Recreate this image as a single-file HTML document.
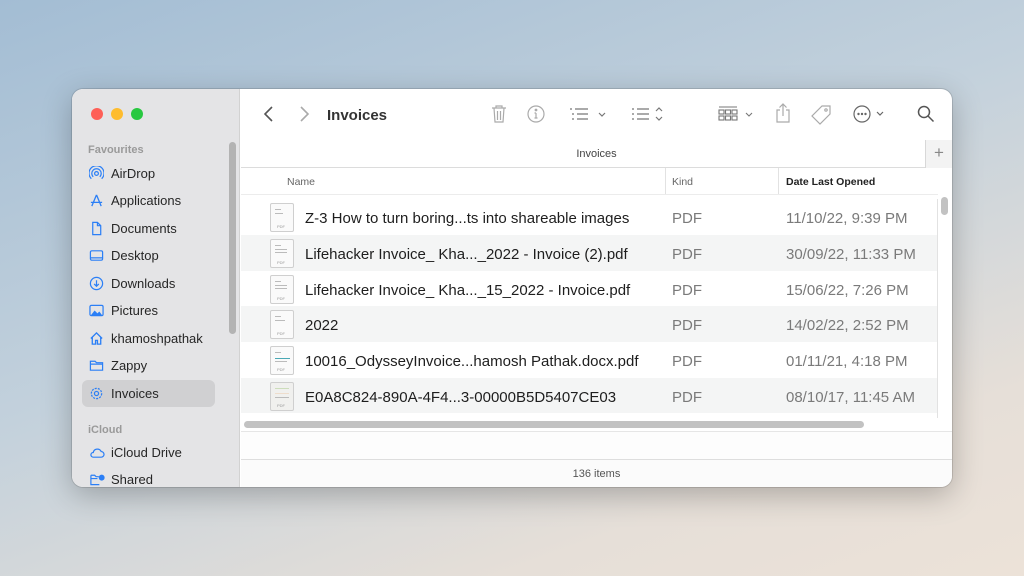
<!DOCTYPE html>
<html><head><meta charset="utf-8"><style>
*{box-sizing:border-box;margin:0;padding:0}
body{width:1024px;height:576px;overflow:hidden;font-family:"Liberation Sans",sans-serif;background:linear-gradient(160deg,#a3bdd4 0%,#c3d1dc 45%,#e6dfd8 80%,#ece2d8 100%);position:relative}
.win{position:absolute;left:72px;top:89px;width:880px;height:398px;border-radius:11px;overflow:hidden;background:#fff;box-shadow:0 8px 30px rgba(0,0,0,.25),0 0 0 1px rgba(0,0,0,.12)}
.side{position:absolute;left:0;top:0;width:168px;height:100%;background:#e4e4e6;border-right:1px solid #d2d2d2}
.dot{position:absolute;top:19px;width:12px;height:12px;border-radius:50%}
.sec{position:absolute;left:16px;font-size:11px;color:#9a9a9a;font-weight:bold}
.it{position:absolute;left:10px;width:133px;height:27px;font-size:13px;color:#262626;line-height:27px;padding-left:29px}
.it svg{position:absolute;left:7px;top:6px}
.sel{background:#d0d0d2;border-radius:6px}
.vsb{position:absolute;left:157px;top:53px;width:7px;height:192px;background:#b3b3b3;border-radius:4px}
.main{position:absolute;left:169px;top:0;right:0;height:100%}
.tb{position:absolute;top:0;left:0;right:0;height:51px}
.tab{position:absolute;top:51px;left:0;right:0;height:28px;border-bottom:1px solid #dcdcdc;font-size:11px;color:#444;text-align:center;line-height:28px}
.plus{position:absolute;right:0;top:0;width:27px;height:28px;border-left:1px solid #d8d8d8;background:#f3f3f3;color:#888;font-size:17px;line-height:26px;text-align:center}
.hdr{position:absolute;top:79px;left:0;width:697px;height:27px;font-size:10.5px;color:#666;border-bottom:1px solid #ececec}
.hdr span{position:absolute;top:8px}
.rows{position:absolute;top:110px;left:0;width:697px;border-right:1px solid #e2e2e2}
.r{height:35.8px;position:relative;font-size:15px;color:#1e1e1e}
.r:nth-child(even){background:#f4f5f5}
.r .n{position:absolute;left:64px;top:11px}
.r .k{position:absolute;left:431px;top:11px;color:#7a7a7a}
.r .d{position:absolute;left:545px;top:11px;color:#7a7a7a}
.fi{position:absolute;left:29px;top:4px;width:24px;height:29px;background:#fafafa;border:1px solid #cfcfcf;border-radius:2px}
.fi:after{content:"PDF";position:absolute;bottom:2px;left:6px;font-size:4px;color:#999}
.fi i{position:absolute;left:4px;height:1px;background:#bbb}
.ic{position:absolute;top:16px}
</style></head><body>
<div class="win">
<div class="side">
<div class="dot" style="left:19px;background:#fe5f57"></div>
<div class="dot" style="left:39px;background:#febc2e"></div>
<div class="dot" style="left:59px;background:#28c840"></div>
<div class="sec" style="top:55px">Favourites</div>
<div class="it" style="top:71px"><svg width="15" height="15" viewBox="0 0 16 16" fill="none" stroke="#2b7ff6" stroke-width="1.3"><circle cx="8" cy="8" r="2"/><path d="M4.5 11.5a5 5 0 1 1 7 0M2.5 13.5a8 8 0 1 1 11 0"/></svg>AirDrop</div>
<div class="it" style="top:98px"><svg width="15" height="15" viewBox="0 0 16 16" fill="none" stroke="#2b7ff6" stroke-width="1.4"><path d="M8 2 3 14M8 2l5 12M2 10h12"/></svg>Applications</div>
<div class="it" style="top:126px"><svg width="15" height="15" viewBox="0 0 16 16" fill="none" stroke="#2b7ff6" stroke-width="1.3"><path d="M4 1.5h5l3.5 3.5v9.5H4z M9 1.5V5h3.5"/></svg>Documents</div>
<div class="it" style="top:153px"><svg width="15" height="15" viewBox="0 0 16 16" fill="none" stroke="#2b7ff6" stroke-width="1.3"><rect x="1.5" y="3" width="13" height="10" rx="1.5"/><path d="M1.5 10.5h13"/></svg>Desktop</div>
<div class="it" style="top:181px"><svg width="15" height="15" viewBox="0 0 16 16" fill="none" stroke="#2b7ff6" stroke-width="1.3"><circle cx="8" cy="8" r="6.5"/><path d="M8 4.5v6M5.5 8.5 8 11l2.5-2.5"/></svg>Downloads</div>
<div class="it" style="top:208px"><svg width="15" height="15" viewBox="0 0 16 16"><rect x="1" y="2.5" width="14" height="11" rx="1.5" fill="none" stroke="#2b7ff6" stroke-width="1.3"/><path d="M2 13l4-5 3 3 2-2 3 4z" fill="#2b7ff6"/></svg>Pictures</div>
<div class="it" style="top:236px"><svg width="15" height="15" viewBox="0 0 16 16" fill="none" stroke="#2b7ff6" stroke-width="1.4"><path d="M2 8 8 2l6 6M3.5 6.5V14h3.5v-4h2v4h3.5V6.5"/></svg>khamoshpathak</div>
<div class="it" style="top:263px"><svg width="15" height="15" viewBox="0 0 16 16" fill="none" stroke="#2b7ff6" stroke-width="1.3"><path d="M1.5 3.5h5l1.5 1.5h6.5v8h-13z M1.5 6.5h13"/></svg>Zappy</div>
<div class="it sel" style="top:291px"><svg width="15" height="15" viewBox="0 0 16 16" fill="none" stroke="#2b7ff6" stroke-width="1.3"><circle cx="8" cy="8" r="2.2"/><circle cx="8" cy="8" r="5.5" stroke-dasharray="2.2 1.2"/></svg>Invoices</div>
<div class="sec" style="top:335px">iCloud</div>
<div class="it" style="top:350px"><svg width="16" height="15" viewBox="0 0 16 16" fill="none" stroke="#2b7ff6" stroke-width="1.3"><path d="M4 13h8.5a3 3 0 0 0 0-6 4.5 4.5 0 0 0-8.5 1A2.5 2.5 0 0 0 4 13z"/></svg>iCloud Drive</div>
<div class="it" style="top:377px"><svg width="16" height="15" viewBox="0 0 16 16" fill="none" stroke="#2b7ff6" stroke-width="1.3"><path d="M1.5 3.5h4l1.5 1.5h3M1.5 3.5v10h9M1.5 7h7"/><circle cx="13" cy="6" r="2.5" fill="#2b7ff6"/></svg>Shared</div>
<div class="vsb"></div>
</div>
<div class="main">
<div class="tb">
<svg class="ic" style="left:22px" width="12" height="18" viewBox="0 0 12 18" fill="none" stroke="#555" stroke-width="1.6"><path d="M9 2 2 9l7 7"/></svg>
<svg class="ic" style="left:57px" width="12" height="18" viewBox="0 0 12 18" fill="none" stroke="#aaa" stroke-width="1.6"><path d="M3 2l7 7-7 7"/></svg>
<div style="position:absolute;left:86px;top:18px;font-size:15px;font-weight:bold;color:#333">Invoices</div>
<svg class="ic" style="left:250px" width="16" height="18" viewBox="0 0 16 18" fill="none" stroke="#aaa" stroke-width="1.2"><path d="M1 3h14M5 3V1h6v2M3 3l1 14h8l1-14M6.5 6v9M9.5 6v9"/></svg>
<svg class="ic" style="left:286px" width="18" height="18" viewBox="0 0 18 18" fill="none" stroke="#aaa" stroke-width="1.2"><circle cx="9" cy="9" r="8"/><path d="M9 8v5M7.5 13h3M7.5 8H9"/><circle cx="9" cy="5" r=".8" fill="#aaa"/></svg>
<svg class="ic" style="left:328px" width="38" height="18" viewBox="0 0 38 18" fill="none" stroke="#777" stroke-width="1.2"><path d="M1 4h2M6 4h13M3 9h2M8 9h11M3 14h2M8 14h11M30 8l3 3 3-3"/></svg>
<svg class="ic" style="left:390px" width="36" height="18" viewBox="0 0 36 18" fill="none" stroke="#777" stroke-width="1.2"><path d="M1 4h2M6 4h12M1 9h2M6 9h12M1 14h2M6 14h12M25 6l3-3 3 3M25 12l3 3 3-3"/></svg>
<svg class="ic" style="left:477px" width="38" height="18" viewBox="0 0 38 18" fill="none" stroke="#777" stroke-width="1.1"><path d="M1 2h18"/><rect x="1" y="5" width="5" height="4"/><rect x="7.5" y="5" width="5" height="4"/><rect x="14" y="5" width="5" height="4"/><rect x="1" y="11" width="5" height="4"/><rect x="7.5" y="11" width="5" height="4"/><rect x="14" y="11" width="5" height="4"/><path d="M28 8l3 3 3-3"/></svg>
<svg class="ic" style="left:534px;top:14px" width="16" height="20" viewBox="0 0 16 20" fill="none" stroke="#aaa" stroke-width="1.2"><path d="M8 1v12M4.5 4.5 8 1l3.5 3.5M5 7H2v12h12V7h-3"/></svg>
<svg class="ic" style="left:570px" width="20" height="20" viewBox="0 0 20 20" fill="none" stroke="#aaa" stroke-width="1.2"><path d="M11 1h8v8L9 19 1 11z"/><circle cx="15" cy="5" r="1.2"/></svg>
<svg class="ic" style="left:612px" width="36" height="20" viewBox="0 0 36 20" fill="none" stroke="#666" stroke-width="1.2"><circle cx="9" cy="9" r="8"/><circle cx="5.5" cy="9" r=".6" fill="#666"/><circle cx="9" cy="9" r=".6" fill="#666"/><circle cx="12.5" cy="9" r=".6" fill="#666"/><path d="M24 7l3 3 3-3"/></svg>
<svg class="ic" style="left:676px" width="18" height="18" viewBox="0 0 18 18" fill="none" stroke="#555" stroke-width="1.5"><circle cx="7" cy="7" r="5.5"/><path d="M11 11l5.5 5.5"/></svg>
</div>
<div class="tab">Invoices<div class="plus">+</div></div>
<div class="hdr">
<span style="left:46px">Name</span>
<span style="left:424px;top:0;height:26px;border-left:1px solid #e2e2e2"></span>
<span style="left:431px">Kind</span>
<span style="left:537px;top:0;height:26px;border-left:1px solid #e2e2e2"></span>
<span style="left:545px;color:#222;font-weight:bold">Date Last Opened</span>
</div>
<div style="position:absolute;left:700px;top:108px;width:7px;height:18px;background:#c2c2c2;border-radius:4px"></div>
<div class="rows">
<div class="r"><div class="fi"><i style="top:5px;width:6px"></i><i style="top:9px;width:8px"></i></div><span class="n">Z-3 How to turn boring...ts into shareable images</span><span class="k">PDF</span><span class="d">11/10/22, 9:39 PM</span></div>
<div class="r"><div class="fi"><i style="top:5px;width:6px"></i><i style="top:9px;width:12px"></i><i style="top:12px;width:12px"></i></div><span class="n">Lifehacker Invoice_ Kha..._2022 - Invoice (2).pdf</span><span class="k">PDF</span><span class="d">30/09/22, 11:33 PM</span></div>
<div class="r"><div class="fi"><i style="top:5px;width:6px"></i><i style="top:9px;width:12px"></i><i style="top:12px;width:12px"></i></div><span class="n">Lifehacker Invoice_ Kha..._15_2022 - Invoice.pdf</span><span class="k">PDF</span><span class="d">15/06/22, 7:26 PM</span></div>
<div class="r"><div class="fi"><i style="top:5px;width:6px"></i><i style="top:9px;width:10px"></i></div><span class="n">2022</span><span class="k">PDF</span><span class="d">14/02/22, 2:52 PM</span></div>
<div class="r"><div class="fi"><i style="top:5px;width:6px"></i><i style="top:11px;width:15px;background:#4aa9b5"></i><i style="top:14px;width:12px"></i></div><span class="n">10016_OdysseyInvoice...hamosh Pathak.docx.pdf</span><span class="k">PDF</span><span class="d">01/11/21, 4:18 PM</span></div>
<div class="r"><div class="fi" style="background:#f0f0ee"><i style="top:5px;width:14px;background:#cdb"></i><i style="top:10px;width:14px;background:#edc"></i><i style="top:14px;width:14px"></i></div><span class="n">E0A8C824-890A-4F4...3-00000B5D5407CE03</span><span class="k">PDF</span><span class="d">08/10/17, 11:45 AM</span></div>
</div>
<div style="position:absolute;left:0;top:324px;width:697px;height:5px;background:#fff;border-right:1px solid #e2e2e2"></div>
<div style="position:absolute;left:3px;top:332px;width:620px;height:7px;background:#c2c2c2;border-radius:4px"></div>
<div style="position:absolute;left:0;right:0;top:342px;border-top:1px solid #e6e6e6;height:28px;background:#fdfdfd"></div>
<div style="position:absolute;left:0;right:0;top:370px;bottom:0;border-top:1px solid #dedede;background:#fbfbfb;font-size:11px;color:#555;text-align:center;line-height:28px">136 items</div>
</div>
</div>
</body></html>
